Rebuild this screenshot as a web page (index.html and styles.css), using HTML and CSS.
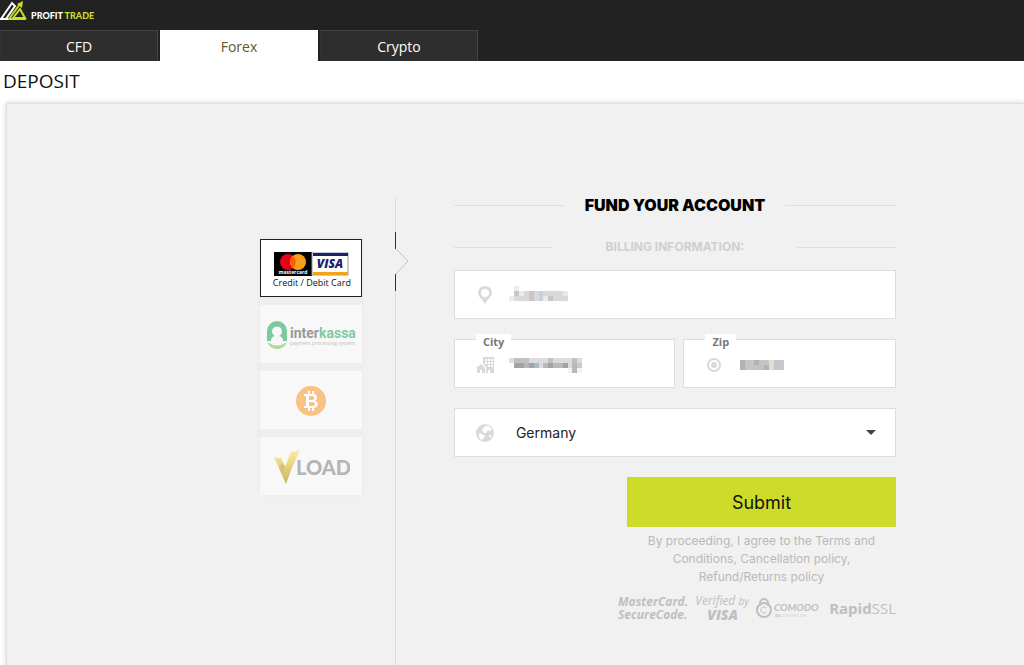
FILE: index.html
```html
<!DOCTYPE html>
<html lang="en">
<head>
    <meta charset="UTF-8">
    <meta name="viewport" content="width=device-width, initial-scale=1.0">
    <title>Deposit - Profit Trade</title>
    <link rel="stylesheet" href="styles.css">
</head>
<body>
    <header>
        <a href="#" class="brand">
            <svg width="27" height="20" viewBox="0 0 27 20" aria-hidden="true">
                <path d="M1 19 L12 3 L15 6 L6 19" fill="none" stroke="#fff" stroke-width="2"/>
                <path d="M0 19 H8" stroke="#fff" stroke-width="2"/>
                <path d="M9 19 L20 4" fill="none" stroke="#cddc29" stroke-width="2"/>
                <path d="M17 4 L23 1 L22 8 Z" fill="#cddc29"/>
                <path d="M13 18 L20 9 L25 18 Z" fill="none" stroke="#cddc29" stroke-width="2"/>
                <path d="M8 19 H26" stroke="#cddc29" stroke-width="2"/>
            </svg>
            <span class="brand-name">PROFIT <b>TRADE</b></span>
        </a>
        <nav class="tabs">
            <a href="#" class="tab">CFD</a>
            <a href="#" class="tab active">Forex</a>
            <a href="#" class="tab">Crypto</a>
        </nav>
    </header>

    <h1>DEPOSIT</h1>

    <main class="panel">
        <div class="methods">
            <button type="button" class="method selected">
                <svg width="75" height="24" viewBox="0 0 75 24" aria-hidden="true">
                    <rect width="38" height="24" fill="#000"/>
                    <circle cx="14" cy="10" r="8" fill="#eb001b"/>
                    <circle cx="24" cy="10" r="8" fill="#f79e1b"/>
                    <path d="M19 4 A8 8 0 0 1 19 16 A8 8 0 0 1 19 4" fill="#ff5f00"/>
                    <text x="19" y="22" class="mc-text">mastercard</text>
                    <rect x="38" y="0" width="36" height="23" fill="#fff" stroke="#999"/>
                    <rect x="39" y="1" width="35" height="3" fill="#1a2170"/>
                    <rect x="39" y="20" width="35" height="3" fill="#f2a31c"/>
                    <text x="56" y="16" class="visa-text">VISA</text>
                </svg>
                <span class="method-label">Credit / Debit Card</span>
            </button>
            <button type="button" class="method">
                <svg width="90" height="30" viewBox="0 0 90 30" aria-hidden="true">
                    <path d="M1 21 V11 A10 10 0 0 1 21 11 V21 H17 A5 5 0 0 0 13 16 A5 5 0 1 0 9 16 A5 5 0 0 0 5 21 Z" fill="#7cc99d"/>
                    <path d="M1 22 Q11 29 21 22 Q18 29 11 29 Q4 29 1 22 Z" fill="#a9dc94"/>
                    <text x="24" y="18" class="ik-text">inter<tspan fill="#7dcca4">kassa</tspan></text>
                    <text x="24" y="25" class="ik-sub">payment processing system</text>
                </svg>
            </button>
            <button type="button" class="method" aria-label="Bitcoin">
                <svg width="30" height="30" viewBox="0 0 30 30" aria-hidden="true">
                    <circle cx="15" cy="15" r="15" fill="#f9c283"/>
                    <path fill="#fff" fill-rule="evenodd" d="M8 8 H12 V5 H14 V8 H16 V5 H18 V8 C22 9 22 13 19 15 C23 16 23 21 18 22 V25 H16 V22 H14 V25 H12 V22 H8 V20 H10 V10 H8 Z M13 10 V14 H16 C19 14 19 10 16 10 Z M13 16 V20 H16 C20 20 20 16 16 16 Z"/>
                </svg>
            </button>
            <button type="button" class="method">
                <svg width="78" height="34" viewBox="0 0 78 34" aria-hidden="true">
                    <defs>
                        <linearGradient id="gold" x1="0" y1="0" x2="0" y2="1">
                            <stop offset="0" stop-color="#fbee9e"/>
                            <stop offset="1" stop-color="#cdb263"/>
                        </linearGradient>
                    </defs>
                    <path d="M2 7 Q7 9 9 8 L13 17 L19 2 Q24 2 28 0 Q20 16 14 34 Z" fill="url(#gold)"/>
                    <path d="M7 17 L11 13 L13 17 L11 26 Z" fill="#d9c06c"/>
                    <text x="24" y="25" class="vload-text">LOAD</text>
                </svg>
            </button>
        </div>

        <div class="divider">
            <svg width="14" height="60" viewBox="0 0 14 60" aria-hidden="true">
                <path d="M0 16 H1 L14 29 L1 43 H0 Z" fill="#f1f1f1"/>
                <path d="M0 16 L13 29 L0 43" fill="none" stroke="#c4c4c4"/>
                <path d="M0 0 H1 V17 H0 Z M0 42 H1 V59 H0 Z" fill="#333"/>
            </svg>
        </div>

        <form class="deposit-form">
            <h2>Fund your account</h2>
            <h3>Billing information:</h3>

            <div class="field">
                <svg class="icon" width="18" height="18" viewBox="0 0 18 18" aria-hidden="true">
                    <path fill-rule="evenodd" d="M9 0 C5 0 2 3 2 7 C2 10 6 13 9 18 C12 13 16 10 16 7 C16 3 13 0 9 0 Z M9 3 A4 4 0 1 1 9 11 A4 4 0 1 1 9 3 Z"/>
                </svg>
                <svg class="mask" width="59" height="17" viewBox="0 0 59 17" shape-rendering="crispEdges" aria-hidden="true">
                    <path fill="#ececec" d="M0 10h5v5H0zM10 5h5v5H10zM5 0h5v5H5z"/>
                    <path fill="#cbc5c6" d="M5 5h5v5H5zM20 5h5v10H20zM39 10h5v5H39z"/>
                    <path fill="#d9d9d9" d="M5 10h15v5H5zM15 5h5v5H15zM25 5h5v10H25zM34 5h20v5H34zM44 10h15v5H44z"/>
                    <path fill="#c5d2df" d="M30 5h4v10H30z"/>
                    <path fill="#e6eaef" d="M54 5h5v5H54zM34 10h5v5H34z"/>
                </svg>
                <input type="text" name="address" aria-label="Address">
            </div>

            <div class="row">
                <div class="field">
                    <label for="city">City</label>
                    <svg class="icon" width="18" height="18" viewBox="0 0 18 18" aria-hidden="true">
                        <path fill-rule="evenodd" d="M7 1 H18 V17 H14 V14 H12 V17 H10 V11 L7 8 Z M9 3 V5 H11 V3 Z M12 3 V5 H14 V3 Z M15 3 V5 H17 V3 Z M9 6 V8 H11 V6 Z M12 6 V8 H14 V6 Z M15 6 V8 H17 V6 Z M12 9 V11 H14 V9 Z M15 9 V11 H17 V9 Z"/>
                        <path d="M0 12 L5 8 L9 12 V17 H6 V14 H4 V17 H1 V12 Z"/>
                    </svg>
                    <svg class="mask" width="73" height="15" viewBox="0 0 73 15" shape-rendering="crispEdges" aria-hidden="true">
                        <path fill="#ecdccd" d="M0 0h5v5H0z"/>
                        <path fill="#bfc0c8" d="M5 0h15v5H5zM39 0h5v5H39zM63 0h5v5H63z"/>
                        <path fill="#dcdcdc" d="M20 0h19v5H20zM44 0h19v5H44zM68 0h5v5H68zM30 5h4v5H30zM59 5h4v5H59z"/>
                        <path fill="#a7a2a2" d="M5 5h10v5H5zM20 5h5v5H20zM39 5h5v5H39zM54 5h5v5H54z"/>
                        <path fill="#bdb8b8" d="M15 5h5v5H15zM34 5h5v5H34zM44 5h10v5H44zM63 5h5v10H63z"/>
                        <path fill="#a9bccb" d="M25 5h5v5H25z"/>
                        <path fill="#c5c9dc" d="M68 5h5v5H68z"/>
                        <path fill="#f1f3f6" d="M59 10h4v5H59zM68 10h5v5H68z"/>
                    </svg>
                    <input type="text" id="city" name="city">
                </div>
                <div class="field">
                    <label for="zip">Zip</label>
                    <svg class="icon" width="18" height="18" viewBox="0 0 18 18" aria-hidden="true">
                        <circle cx="9" cy="9" r="6" fill="none" stroke="#d9d9d9" stroke-width="2"/>
                        <circle cx="9" cy="9" r="3"/>
                    </svg>
                    <svg class="mask" width="46" height="15" viewBox="0 0 46 15" shape-rendering="crispEdges" aria-hidden="true">
                        <path fill="#b4b1b2" d="M2 2h5v10H2zM16 2h5v5H16zM26 7h5v5H26z"/>
                        <path fill="#c6c4c6" d="M7 2h9v10H7zM21 2h10v5H21zM36 2h5v10H36z"/>
                        <path fill="#c8bfc0" d="M16 7h10v5H16z"/>
                        <path fill="#dfdcda" d="M31 2h5v10H31z"/>
                        <path fill="#c3c9d0" d="M41 2h5v10H41z"/>
                    </svg>
                    <input type="text" id="zip" name="zip">
                </div>
            </div>

            <div class="field select-field">
                <svg class="icon" width="18" height="18" viewBox="0 0 18 18" aria-hidden="true">
                    <circle cx="9" cy="9" r="9"/>
                    <path d="M9 2 L13 2 L16 6 L13 7 L12 6 L10 9 L8 9 L6 6 Z M3 9 L6 10 L9 12 L7 15 L5 16 L3 13 Z M13 11 L16 11 L14 14 Z" fill="#fff"/>
                </svg>
                <select name="country" aria-label="Country">
                    <option>Germany</option>
                </select>
                <svg class="caret" width="10" height="5" viewBox="0 0 10 5" aria-hidden="true">
                    <path d="M0 0 H10 L5 5 Z" fill="#444"/>
                </svg>
            </div>

            <div class="actions">
                <button type="submit">Submit</button>
                <p>By proceeding, I agree to the Terms and Conditions, Cancellation policy, Refund/Returns policy</p>
            </div>

            <div class="trust">
                <span class="mastercard">MasterCard.<br>SecureCode.</span>
                <span class="verified"><i>Verified <small>by</small></i><b>VISA</b></span>
                <svg width="66" height="20" viewBox="0 0 66 20" aria-hidden="true">
                    <path d="M4 8 V5 A4 4 0 0 1 12 5 V8" fill="none" stroke="#bfbfbf" stroke-width="2"/>
                    <circle cx="8" cy="12" r="7" fill="none" stroke="#bfbfbf" stroke-width="2"/>
                    <path d="M10 10 A3 3 0 1 0 10 14" fill="none" stroke="#bfbfbf" stroke-width="1"/>
                    <text x="18" y="13" class="comodo-text">COMODO</text>
                    <text x="19" y="19" class="comodo-sub">SSL <tspan fill="#dcdcdc">CERTIFICATE</tspan></text>
                </svg>
                <span class="rapid"><b>Rapid</b>SSL</span>
            </div>
        </form>
    </main>
</body>
</html>
```

FILE: styles.css
```css
:root {
    --dark: #222;
    --lime: #cddc29;
    --panel: #f1f1f1;
    --line: #e0e0e0;
    --muted: #bfbfbf;
}

* {
    box-sizing: border-box;
}

body {
    margin: 0;
    min-height: 100vh;
    display: flex;
    flex-direction: column;
    background: #fff;
    color: #111;
    font-family: Inter, sans-serif;
}

header {
    background: var(--dark);
}

.brand {
    display: flex;
    align-items: flex-end;
    gap: 4px;
    height: 30px;
    padding-bottom: 10px;
    color: #fff;
    text-decoration: none;
}

.brand-name {
    font: 900 9px/8px Lato, sans-serif;
}

.brand-name b {
    color: var(--lime);
    font-weight: 900;
}

.tabs {
    display: flex;
    gap: 2px;
}

.tab {
    width: 158px;
    height: 31px;
    border: 1px solid #444;
    border-bottom: 0;
    border-left-color: #333;
    background: #2e2e2e;
    color: #fff;
    font: 14px/31px "Open Sans", sans-serif;
    text-align: center;
    text-decoration: none;
}

.tab.active {
    border-color: #fff;
    background: #fff;
    color: #5a5a2c;
}

h1 {
    margin: 0;
    padding: 6px 3px 8px;
    font: 400 19px/28px "Open Sans", sans-serif;
}

.panel {
    flex: 1;
    display: flex;
    margin-left: 6px;
    padding: 94px 12.5% 0 24.7%;
    border: 1px solid var(--line);
    border-width: 1px 0 0 1px;
    background: var(--panel);
    box-shadow: 0 0 5px rgba(0, 0, 0, 0.2);
}

.methods {
    display: flex;
    flex-direction: column;
    align-self: flex-start;
    gap: 8px;
    margin-top: 41px;
    box-shadow: 0 0 5px rgba(0, 0, 0, 0.03);
    background: #eee;
}

.method {
    display: flex;
    flex-direction: column;
    align-items: center;
    justify-content: center;
    width: 102px;
    height: 58px;
    padding: 2px 0 0;
    border: 0;
    background: #f8f8f8;
    cursor: pointer;
}

.method.selected {
    border: 1px solid #222;
    background: #fff;
    padding: 5px 0 0 2px;
}

.method-label {
    color: #111;
    font: 9px/14px "Open Sans", sans-serif;
}

.mc-text {
    fill: #fff;
    font: 700 5px "Open Sans", sans-serif;
    text-anchor: middle;
}

.visa-text {
    fill: #1a2170;
    font: italic 800 12px "Open Sans", sans-serif;
    text-anchor: middle;
}

.ik-text {
    fill: #999;
    font: 700 14px Roboto, sans-serif;
}

.ik-sub {
    fill: #c0c0c0;
    font: 5px "Open Sans", sans-serif;
}

.vload-text {
    fill: #b5b5b5;
    font: 900 20px Lato, sans-serif;
}

.divider {
    flex: none;
    width: 14px;
    margin-left: 33px;
    padding-top: 34px;
    border-left: 1px solid #ddd;
}

.divider svg {
    display: block;
    margin-left: -1px;
}

.deposit-form {
    flex: 1;
    min-width: 0;
    margin-left: 45px;
}

h2, h3 {
    display: flex;
    align-items: center;
    justify-content: space-between;
    margin: 0;
    text-transform: uppercase;
}

h2 {
    gap: 20px;
    color: #000;
    font-size: 16px;
    font-weight: 900;
    line-height: 14px;
}

h3 {
    gap: 53px;
    margin-top: 27px;
    color: #cfcfcf;
    font-size: 12px;
    font-weight: 700;
    line-height: 16px;
}

h2::before, h2::after, h3::before, h3::after {
    content: "";
    flex: 1;
    height: 1px;
    background: var(--line);
}

.field {
    position: relative;
    display: flex;
    align-items: center;
    height: 49px;
    padding: 0 21px;
    border: 1px solid #dedede;
    background: #fff;
}

h3 + .field {
    margin-top: 15px;
}

.row {
    display: grid;
    grid-template-columns: 221fr 212fr;
    gap: 8px;
    margin: 20px 0;
}

.field label {
    position: absolute;
    top: -6px;
    left: 21px;
    padding: 0 7px;
    background: #fff;
    color: #777;
    font: 700 11px/16px "Open Sans", sans-serif;
}

.icon {
    flex: none;
    fill: #d9d9d9;
}

.mask {
    flex: none;
    margin-left: 15px;
}

.row .icon, .row .mask {
    margin-top: 3px;
}

.field input, .field select {
    flex: 1;
    width: 0;
    min-width: 0;
    height: 100%;
    border: 0;
    background: none;
    color: #222;
    font: 14px Inter, sans-serif;
    outline: none;
}

.field select {
    margin-left: 22px;
    padding: 0;
    appearance: none;
}

.caret {
    position: absolute;
    right: 19px;
    pointer-events: none;
}

.actions {
    width: 269px;
    margin: 20px 0 0 auto;
    text-align: center;
}

.actions button {
    width: 100%;
    height: 50px;
    border: 0;
    background: var(--lime);
    color: #111;
    font: 18px Inter, sans-serif;
    cursor: pointer;
}

.actions p {
    margin: 5px 16px 0;
    color: #b9b9b9;
    font-size: 12px;
    line-height: 18px;
}

.trust {
    display: flex;
    align-items: center;
    justify-content: space-between;
    width: 278px;
    margin: 8px 0 20px auto;
    color: var(--muted);
}

.mastercard {
    font: italic 700 12px/13px "Open Sans", sans-serif;
}

.verified {
    display: flex;
    flex-direction: column;
    font: 12px/13px "Open Sans", sans-serif;
}

.verified small {
    font-size: 10px;
}

.verified b {
    padding-left: 12px;
    font-size: 14px;
    font-style: italic;
    font-weight: 800;
}

.comodo-text {
    fill: var(--muted);
    font: italic 700 10px Lato, sans-serif;
}

.comodo-sub {
    fill: var(--muted);
    font: 700 4px Lato, sans-serif;
}

.rapid {
    font: 15px/20px "Open Sans", sans-serif;
}

@media (max-width: 860px) {
    .panel {
        padding: 40px 20px 0;
    }
}
```
